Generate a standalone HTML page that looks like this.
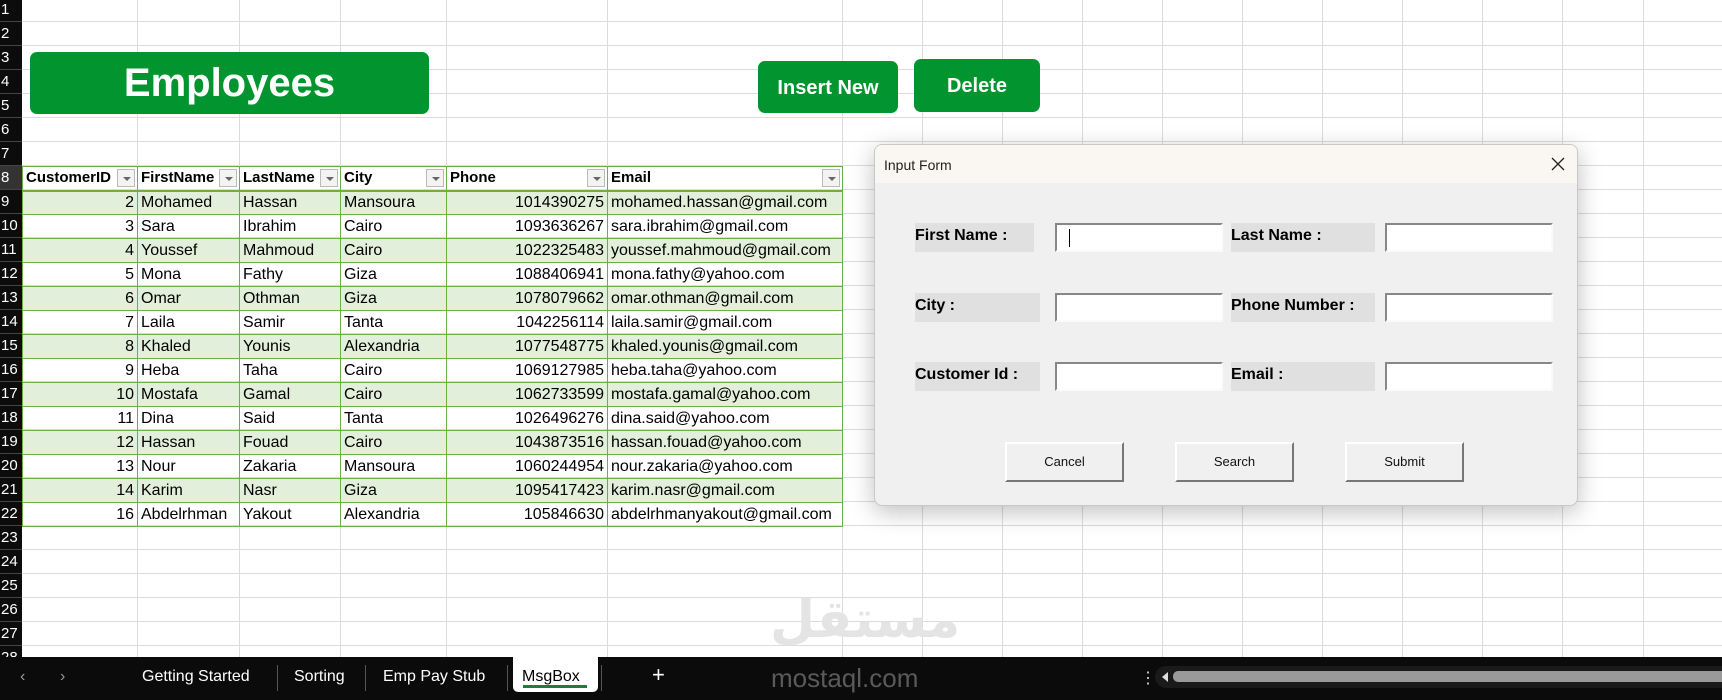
<!DOCTYPE html>
<html><head><meta charset="utf-8"><style>
*{margin:0;padding:0;box-sizing:border-box}
body{width:1722px;height:700px;overflow:hidden;background:#fff;position:relative;font-family:"Liberation Sans",Arial,sans-serif}
.grid2{position:absolute;left:0;top:-2px;width:1722px;height:659px;background:repeating-linear-gradient(to bottom,transparent 0 23px,#dcdcdc 23px 24px)}
.vl{position:absolute;top:0;height:657px;width:1px;background:#dcdcdc}
.rh{position:absolute;left:0;top:0;width:22px;height:657px;background:#0c0c0c}
.rn{position:absolute;left:0;width:22px;height:24px;color:#fff;font-size:15px;line-height:24px;padding-left:1px;border-bottom:1px solid #444;overflow:hidden}
.btn{position:absolute;background:#02952f;color:#fff;font-weight:bold;text-align:center;border-radius:7px}
table{position:absolute;left:22px;top:166px;border-collapse:collapse;table-layout:fixed;font-size:16px;color:#000}
td{height:24px;border:1px solid #70ad47;padding:0 3px;white-space:nowrap;overflow:hidden;line-height:22px}
tr.h td{font-weight:bold;font-size:15px;position:relative;border-bottom:2px solid #70ad47}
tr.g td{background:#e2efda}
td.n{text-align:right}
.f{position:absolute;right:2px;top:2px;width:18px;height:18px;border:1px solid #bbb;background:#f3f3f3}
.f:after{content:"";position:absolute;left:5px;top:7px;border-left:4px solid transparent;border-right:4px solid transparent;border-top:4px solid #666}
.dlg{position:absolute;left:874px;top:144px;width:704px;height:362px;background:#f0f0f0;border:1px solid #c8c8c8;border-radius:8px;box-shadow:0 6px 24px rgba(0,0,0,.25);overflow:hidden}
.tb{height:38px;background:#faf7f2;font-size:14px;color:#222;padding:12px 0 0 9px;position:relative}
.lb{position:absolute;background:#e0e0e0;font-weight:bold;font-size:16px;height:29px;padding:4px 0 0 0;color:#000;white-space:nowrap}
.in{position:absolute;width:168px;height:29px;background:#fff;border-top:2px solid #888;border-left:2px solid #888;border-right:2px solid #fafafa;border-bottom:2px solid #fafafa}
.db{position:absolute;width:119px;height:40px;top:297px;background:#f0f0f0;border-top:2px solid #fff;border-left:2px solid #fff;border-right:2px solid #777;border-bottom:2px solid #777;font-size:13px;text-align:center;line-height:35px;color:#111}
.tabs{position:absolute;left:0;top:657px;width:1722px;height:43px;background:#0b0b0b;color:#fff;font-size:16px}
.tabs span{position:absolute;top:11px}
.sep{position:absolute;top:8px;width:1px;height:26px;background:#555}
</style></head><body>
<div class="grid2"></div>
<div class="vl" style="left:137px"></div><div class="vl" style="left:239px"></div><div class="vl" style="left:340px"></div><div class="vl" style="left:446px"></div><div class="vl" style="left:607px"></div><div class="vl" style="left:842px"></div><div class="vl" style="left:922px"></div><div class="vl" style="left:1002px"></div><div class="vl" style="left:1082px"></div><div class="vl" style="left:1162px"></div><div class="vl" style="left:1242px"></div><div class="vl" style="left:1322px"></div><div class="vl" style="left:1402px"></div><div class="vl" style="left:1482px"></div><div class="vl" style="left:1562px"></div><div class="vl" style="left:1643px"></div>
<div class="rh">
<div class="rn" style="top:-2px">1</div><div class="rn" style="top:22px">2</div><div class="rn" style="top:46px">3</div><div class="rn" style="top:70px">4</div><div class="rn" style="top:94px">5</div><div class="rn" style="top:118px">6</div><div class="rn" style="top:142px">7</div><div class="rn" style="top:166px;background:#333">8</div><div class="rn" style="top:190px">9</div><div class="rn" style="top:214px">10</div><div class="rn" style="top:238px">11</div><div class="rn" style="top:262px">12</div><div class="rn" style="top:286px">13</div><div class="rn" style="top:310px">14</div><div class="rn" style="top:334px">15</div><div class="rn" style="top:358px">16</div><div class="rn" style="top:382px">17</div><div class="rn" style="top:406px">18</div><div class="rn" style="top:430px">19</div><div class="rn" style="top:454px">20</div><div class="rn" style="top:478px">21</div><div class="rn" style="top:502px">22</div><div class="rn" style="top:526px">23</div><div class="rn" style="top:550px">24</div><div class="rn" style="top:574px">25</div><div class="rn" style="top:598px">26</div><div class="rn" style="top:622px">27</div><div class="rn" style="top:646px">28</div>
</div>
<div class="btn" style="left:30px;top:52px;width:399px;height:62px;font-size:40px;line-height:62px">Employees</div>
<div class="btn" style="left:758px;top:61px;width:140px;height:52px;font-size:20px;line-height:54px">Insert New</div>
<div class="btn" style="left:914px;top:59px;width:126px;height:53px;font-size:20px;line-height:54px">Delete</div>
<table>
<colgroup><col style="width:115px"><col style="width:102px"><col style="width:101px"><col style="width:106px"><col style="width:161px"><col style="width:235px"></colgroup>
<tr class="h"><td>CustomerID<i class="f"></i></td><td>FirstName<i class="f"></i></td><td>LastName<i class="f"></i></td><td>City<i class="f"></i></td><td>Phone<i class="f"></i></td><td>Email<i class="f"></i></td></tr>
<tr class="g"><td class="n">2</td><td>Mohamed</td><td>Hassan</td><td>Mansoura</td><td class="n">1014390275</td><td>mohamed.hassan@gmail.com</td></tr>
<tr><td class="n">3</td><td>Sara</td><td>Ibrahim</td><td>Cairo</td><td class="n">1093636267</td><td>sara.ibrahim@gmail.com</td></tr>
<tr class="g"><td class="n">4</td><td>Youssef</td><td>Mahmoud</td><td>Cairo</td><td class="n">1022325483</td><td>youssef.mahmoud@gmail.com</td></tr>
<tr><td class="n">5</td><td>Mona</td><td>Fathy</td><td>Giza</td><td class="n">1088406941</td><td>mona.fathy@yahoo.com</td></tr>
<tr class="g"><td class="n">6</td><td>Omar</td><td>Othman</td><td>Giza</td><td class="n">1078079662</td><td>omar.othman@gmail.com</td></tr>
<tr><td class="n">7</td><td>Laila</td><td>Samir</td><td>Tanta</td><td class="n">1042256114</td><td>laila.samir@gmail.com</td></tr>
<tr class="g"><td class="n">8</td><td>Khaled</td><td>Younis</td><td>Alexandria</td><td class="n">1077548775</td><td>khaled.younis@gmail.com</td></tr>
<tr><td class="n">9</td><td>Heba</td><td>Taha</td><td>Cairo</td><td class="n">1069127985</td><td>heba.taha@yahoo.com</td></tr>
<tr class="g"><td class="n">10</td><td>Mostafa</td><td>Gamal</td><td>Cairo</td><td class="n">1062733599</td><td>mostafa.gamal@yahoo.com</td></tr>
<tr><td class="n">11</td><td>Dina</td><td>Said</td><td>Tanta</td><td class="n">1026496276</td><td>dina.said@yahoo.com</td></tr>
<tr class="g"><td class="n">12</td><td>Hassan</td><td>Fouad</td><td>Cairo</td><td class="n">1043873516</td><td>hassan.fouad@yahoo.com</td></tr>
<tr><td class="n">13</td><td>Nour</td><td>Zakaria</td><td>Mansoura</td><td class="n">1060244954</td><td>nour.zakaria@yahoo.com</td></tr>
<tr class="g"><td class="n">14</td><td>Karim</td><td>Nasr</td><td>Giza</td><td class="n">1095417423</td><td>karim.nasr@gmail.com</td></tr>
<tr><td class="n">16</td><td>Abdelrhman</td><td>Yakout</td><td>Alexandria</td><td class="n">105846630</td><td>abdelrhmanyakout@gmail.com</td></tr>
</table>
<div class="dlg">
<div class="tb">Input Form<svg style="position:absolute;right:12px;top:12px" width="14" height="14" viewBox="0 0 14 14"><path d="M1 1L13 13M13 1L1 13" stroke="#222" stroke-width="1.3"/></svg></div>
<div class="lb" style="left:40px;top:78px;width:119px">First Name :</div>
<div class="in" style="left:180px;top:78px"><span style="position:absolute;left:12px;top:4px;width:1px;height:18px;background:#000"></span></div>
<div class="lb" style="left:356px;top:78px;width:144px">Last Name :</div>
<div class="in" style="left:510px;top:78px"></div>
<div class="lb" style="left:40px;top:148px;width:125px">City :</div>
<div class="in" style="left:180px;top:148px"></div>
<div class="lb" style="left:356px;top:148px;width:144px">Phone Number :</div>
<div class="in" style="left:510px;top:148px"></div>
<div class="lb" style="left:40px;top:217px;width:125px">Customer Id :</div>
<div class="in" style="left:180px;top:217px"></div>
<div class="lb" style="left:356px;top:217px;width:144px">Email :</div>
<div class="in" style="left:510px;top:217px"></div>
<div class="db" style="left:130px">Cancel</div>
<div class="db" style="left:300px">Search</div>
<div class="db" style="left:470px">Submit</div>
</div>
<div style="position:absolute;left:770px;top:590px;font-size:52px;color:#e4e4e4;font-weight:bold;font-family:'DejaVu Sans',sans-serif">مستقل</div>
<div class="tabs">
<span style="left:20px;color:#999">‹</span><span style="left:60px;color:#999">›</span>
<span style="left:142px">Getting Started</span><div class="sep" style="left:277px"></div>
<span style="left:294px">Sorting</span><div class="sep" style="left:365px"></div>
<span style="left:383px">Emp Pay Stub</span><div class="sep" style="left:507px"></div>
<div style="position:absolute;left:513px;top:0;width:85px;height:35px;background:#fff;border-radius:0 0 5px 5px"></div>
<span style="left:522px;color:#000">MsgBox</span>
<div style="position:absolute;left:523px;top:28px;width:64px;height:3px;background:#1e7d3a"></div>
<div class="sep" style="left:601px"></div>
<span style="left:652px;font-size:22px;top:5px">+</span>
<span style="left:771px;top:6px;font-size:26px;color:#5a5a5a">mostaql.com</span>
<span style="left:1140px;color:#ddd">⋮</span>
<div style="position:absolute;left:1155px;top:9px;width:567px;height:22px;background:#1a1a1a;border-radius:11px 0 0 11px"></div>
<div style="position:absolute;left:1162px;top:15px;border-right:6px solid #ddd;border-top:5px solid transparent;border-bottom:5px solid transparent"></div>
<div style="position:absolute;left:1173px;top:14px;width:549px;height:11px;background:#9a9a9a;border-radius:5px 0 0 5px"></div>
</div>
</body></html>
